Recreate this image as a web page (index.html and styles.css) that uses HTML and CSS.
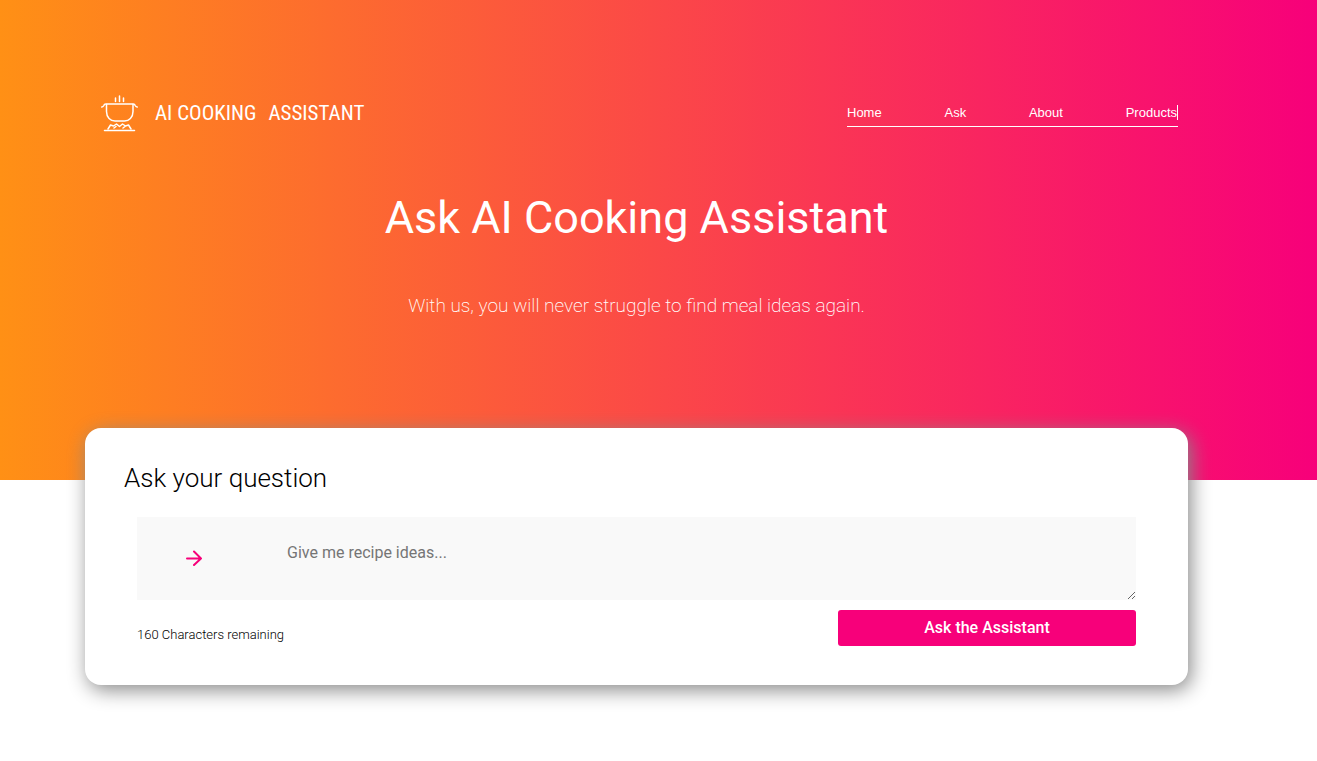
FILE: index.html
```html
<!DOCTYPE html>
<html lang="en">
<head>
<meta charset="utf-8">
<title>AI Cooking Assistant</title>
<link rel="stylesheet" href="styles.css">
</head>
<body>
<header class="hero">
  <div class="topbar">
    <a class="brand" href="#">
      <svg class="brand-icon" viewBox="0 0 38 38" width="38" height="38" fill="none" stroke="currentColor" stroke-width="1.5" stroke-linecap="round" stroke-linejoin="round" aria-hidden="true">
        <path d="M14.500 4v3.500M18.500 2v5.500M22.500 4v3.500"/>
        <path d="M0.800 13c1-.2 1.700-.8 2-1.500.3-.9 1-1.500 2-1.500h27.400c1 0 1.700.6 2 1.500.3.700 1 1.300 2 1.500"/>
        <path d="M5.500 10.500v7c0 6 4 9.500 8.500 9.500h9.500c4.500 0 8.500-3.500 8.500-9.500v-7"/>
        <path d="M7 35l2.500-4 3 1 3-2 3 2.500 3-2.500 3 2 3-1 2.500 4M13 34l2-1.500M22 34l2-1.500"/>
        <path d="M3.500 36.500h30"/>
      </svg>
      <span class="brand-name"><span>AI COOKING</span><span>ASSISTANT</span></span>
    </a>
    <nav class="menu">
      <a href="#">Home</a>
      <a href="#">Ask</a>
      <a href="#">About</a>
      <a href="#">Products</a>
    </nav>
  </div>
  <h1 class="hero-title">Ask AI Cooking Assistant</h1>
  <p class="hero-text">With us, you will never struggle to find meal ideas again.</p>
</header>
<main class="content">
  <form class="card">
    <h2 class="card-title"><label for="question">Ask your question</label></h2>
    <div class="field">
      <textarea class="question" id="question" maxlength="160" placeholder="Give me recipe ideas..."></textarea>
      <svg class="arrow" viewBox="0 0 16 16" width="16" height="16" fill="none" stroke="currentColor" stroke-width="2" stroke-linecap="round" stroke-linejoin="round" aria-hidden="true">
        <path d="M1 8.500h14M8 1.500l7 7-7 6.500"/>
      </svg>
    </div>
    <div class="actions">
      <span class="counter">160 Characters remaining</span>
      <button class="submit" type="button">Ask the Assistant</button>
    </div>
  </form>
</main>
</body>
</html>
```
FILE: styles.css
```css
* {
  box-sizing: border-box;
}

body {
  margin: 0;
  background: #fff;
  color: #000;
  font-family: Roboto, sans-serif;
}

.hero {
  min-height: 480px;
  padding: 93px 44px 0 0;
  background: linear-gradient(90deg, #ff9015, #f7007a);
  color: #fff;
}

.topbar {
  display: flex;
  justify-content: space-between;
  padding: 0 95px 0 101px;
}

.brand {
  display: flex;
  align-items: center;
  gap: 16px;
  height: 40px;
  color: #fff;
  text-decoration: none;
}

.brand-name {
  display: flex;
  gap: 12px;
  font-family: "Roboto Condensed", Roboto, sans-serif;
  font-size: 21px;
  white-space: nowrap;
}

.menu {
  display: flex;
  justify-content: space-between;
  align-self: flex-start;
  width: 31%;
  max-width: 331px;
  margin-top: 12px;
  padding-bottom: 6px;
  border-bottom: 1px solid #fff;
}

.menu a {
  color: #fff;
  font-family: "Liberation Sans", Arial, sans-serif;
  font-size: 13px;
  line-height: 15px;
  text-decoration: none;
}

.menu a:last-child {
  border-right: 1px solid #fff;
}

.hero-title {
  margin: 57px 0 0;
  font-size: 45px;
  font-weight: 400;
  line-height: 56px;
  text-align: center;
}

.hero-text {
  margin: 48px 0 0;
  font-size: 19px;
  font-weight: 200;
  line-height: 24px;
  text-align: center;
}

.content {
  padding: 0 129px 76px 85px;
}

.card {
  position: relative;
  margin-top: -52px;
  padding: 34px 52px 39px;
  border-radius: 16px;
  background: #fff;
  box-shadow: 3px 5px 20px #888;
}

.card-title {
  margin: 0 0 23px -13px;
  font-size: 26px;
  font-weight: 300;
  line-height: 32px;
}

.field {
  position: relative;
}

.question {
  display: block;
  width: 100%;
  height: 83px;
  padding: 24px 24px 0 150px;
  border: 0;
  border-radius: 0;
  outline: 0;
  background: #f9f9f9;
  color: #000;
  font-family: inherit;
  font-size: 16px;
  line-height: 24px;
  resize: vertical;
}

.question::placeholder {
  color: #757575;
}

.arrow {
  position: absolute;
  top: 33px;
  left: 49px;
  color: #f7007a;
}

.actions {
  display: flex;
  justify-content: space-between;
  margin-top: 10px;
}

.counter {
  padding-top: 17px;
  font-size: 13px;
  font-weight: 300;
  line-height: 16px;
}

.submit {
  width: 30%;
  max-width: 298px;
  height: 36px;
  padding: 0 0 2px;
  border: 0;
  border-radius: 3px;
  background: #f7007a;
  color: #fff;
  font-family: inherit;
  font-size: 16px;
  font-weight: 500;
}
```
